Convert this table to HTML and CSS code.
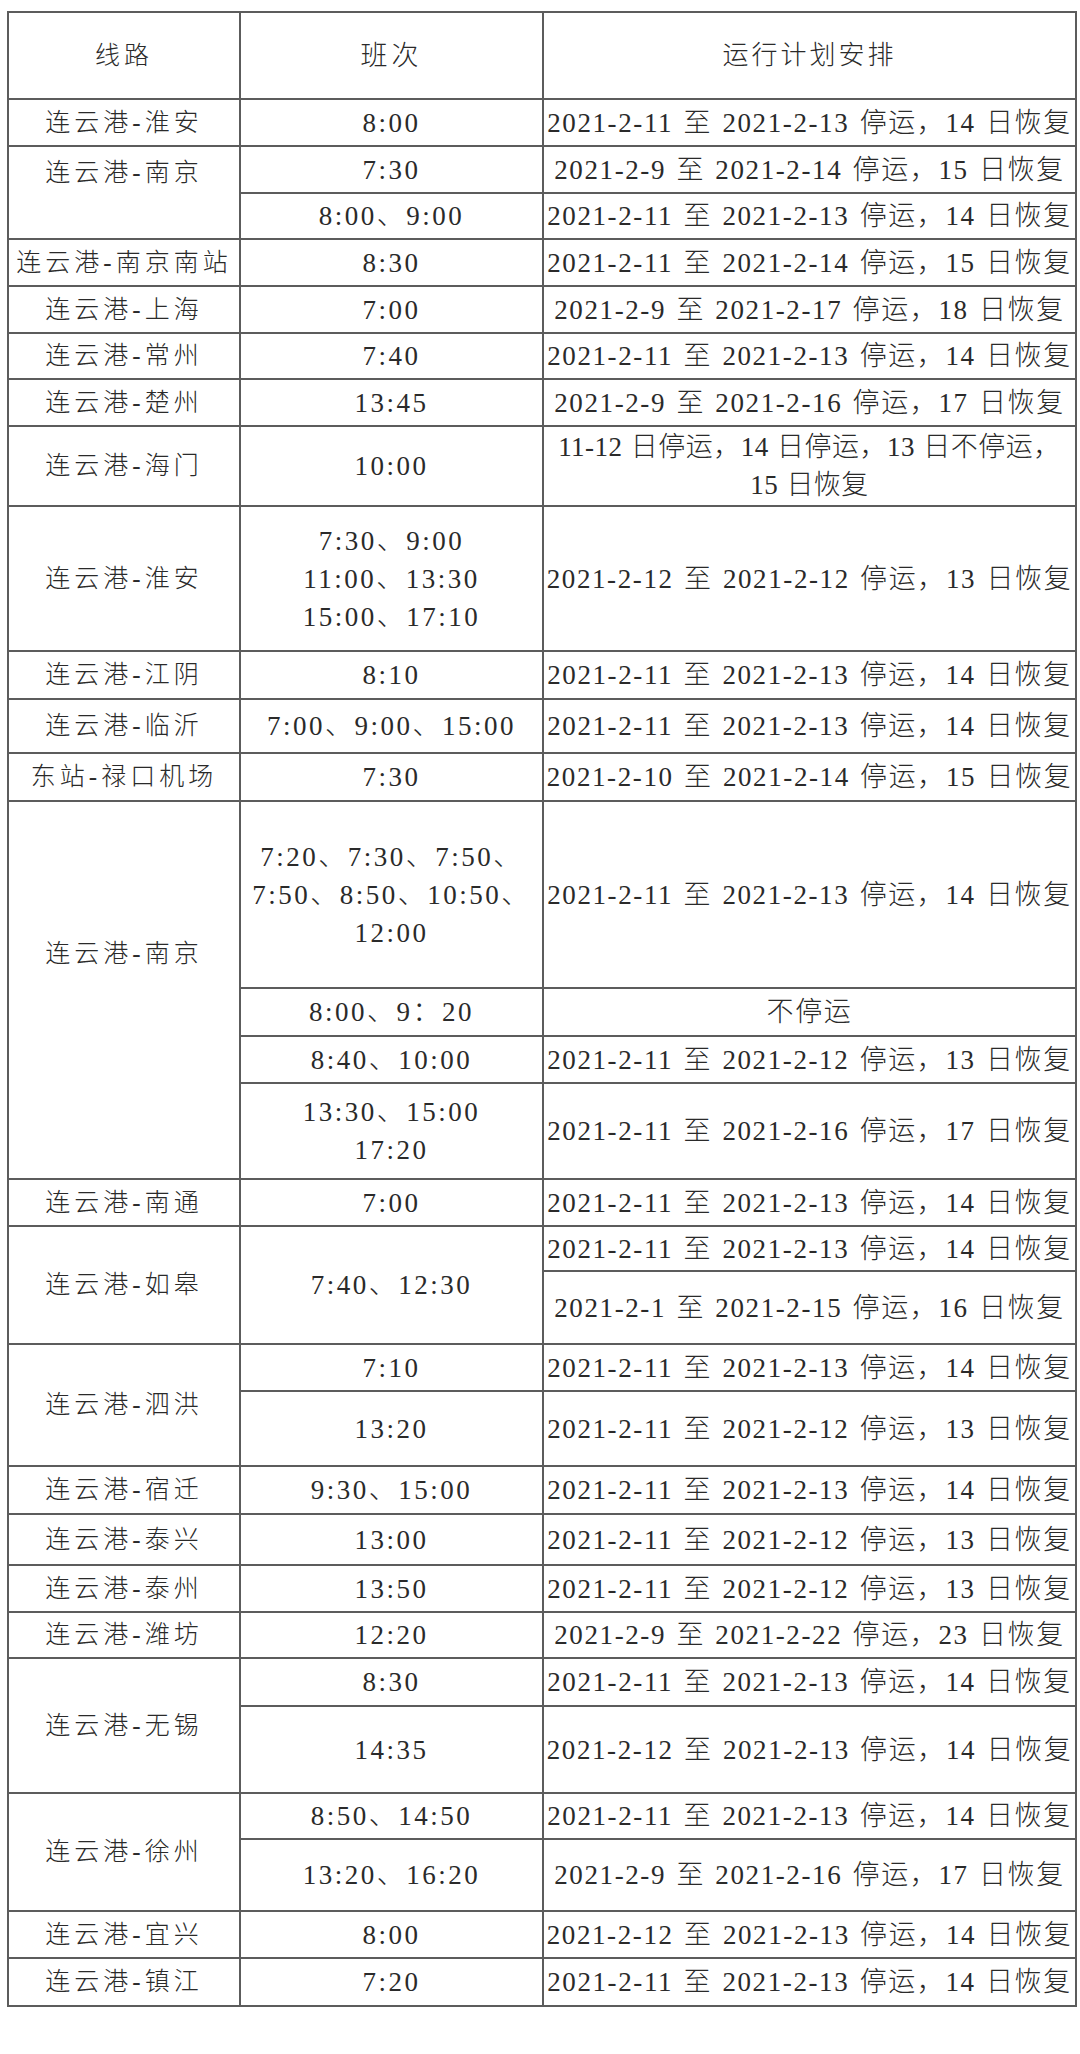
FILE: index.html
```html
<!DOCTYPE html>
<html lang="zh-CN">
<head>
<meta charset="utf-8">
<title>运行计划安排</title>
<link rel="stylesheet" href="styles.css">
</head>
<body>
<table class="sched">
  <colgroup>
    <col class="c-route">
    <col class="c-time">
    <col class="c-plan">
  </colgroup>
  <thead>
    <tr class="h87">
      <th class="route">线路</th>
      <th class="time">班次</th>
      <th class="plan">运行计划安排</th>
    </tr>
  </thead>
  <tbody>
    <tr class="h47"><td class="route">连云港-淮安</td><td class="time">8:00</td><td class="plan">2021-2-11 至 2021-2-13 停运，14 日恢复</td></tr>
    <tr class="h47"><td class="route top" rowspan="2">连云港-南京</td><td class="time">7:30</td><td class="plan">2021-2-9 至 2021-2-14 停运，15 日恢复</td></tr>
    <tr class="h46"><td class="time">8:00、9:00</td><td class="plan">2021-2-11 至 2021-2-13 停运，14 日恢复</td></tr>
    <tr class="h47"><td class="route">连云港-南京南站</td><td class="time">8:30</td><td class="plan">2021-2-11 至 2021-2-14 停运，15 日恢复</td></tr>
    <tr class="h47"><td class="route">连云港-上海</td><td class="time">7:00</td><td class="plan">2021-2-9 至 2021-2-17 停运，18 日恢复</td></tr>
    <tr class="h46"><td class="route">连云港-常州</td><td class="time">7:40</td><td class="plan">2021-2-11 至 2021-2-13 停运，14 日恢复</td></tr>
    <tr class="h47"><td class="route">连云港-楚州</td><td class="time">13:45</td><td class="plan">2021-2-9 至 2021-2-16 停运，17 日恢复</td></tr>
    <tr class="h80"><td class="route">连云港-海门</td><td class="time">10:00</td><td class="plan tight">11-12 日停运，14 日停运，13 日不停运，<br>15 日恢复</td></tr>
    <tr class="h145"><td class="route">连云港-淮安</td><td class="time">7:30、9:00<br>11:00、13:30<br>15:00、17:10</td><td class="plan">2021-2-12 至 2021-2-12 停运，13 日恢复</td></tr>
    <tr class="h48"><td class="route">连云港-江阴</td><td class="time">8:10</td><td class="plan">2021-2-11 至 2021-2-13 停运，14 日恢复</td></tr>
    <tr class="h54"><td class="route">连云港-临沂</td><td class="time">7:00、9:00、15:00</td><td class="plan">2021-2-11 至 2021-2-13 停运，14 日恢复</td></tr>
    <tr class="h48"><td class="route">东站-禄口机场</td><td class="time">7:30</td><td class="plan">2021-2-10 至 2021-2-14 停运，15 日恢复</td></tr>
    <tr class="h187"><td class="route raised" rowspan="4">连云港-南京</td><td class="time">7:20、7:30、7:50、<br>7:50、8:50、10:50、<br>12:00</td><td class="plan">2021-2-11 至 2021-2-13 停运，14 日恢复</td></tr>
    <tr class="h48"><td class="time">8:00、9：20</td><td class="plan">不停运</td></tr>
    <tr class="h47"><td class="time">8:40、10:00</td><td class="plan">2021-2-11 至 2021-2-12 停运，13 日恢复</td></tr>
    <tr class="h96"><td class="time">13:30、15:00<br>17:20</td><td class="plan">2021-2-11 至 2021-2-16 停运，17 日恢复</td></tr>
    <tr class="h47"><td class="route">连云港-南通</td><td class="time">7:00</td><td class="plan">2021-2-11 至 2021-2-13 停运，14 日恢复</td></tr>
    <tr class="h45"><td class="route" rowspan="2">连云港-如皋</td><td class="time" rowspan="2">7:40、12:30</td><td class="plan">2021-2-11 至 2021-2-13 停运，14 日恢复</td></tr>
    <tr class="h73"><td class="plan">2021-2-1 至 2021-2-15 停运，16 日恢复</td></tr>
    <tr class="h47"><td class="route" rowspan="2">连云港-泗洪</td><td class="time">7:10</td><td class="plan">2021-2-11 至 2021-2-13 停运，14 日恢复</td></tr>
    <tr class="h75"><td class="time">13:20</td><td class="plan">2021-2-11 至 2021-2-12 停运，13 日恢复</td></tr>
    <tr class="h48"><td class="route">连云港-宿迁</td><td class="time">9:30、15:00</td><td class="plan">2021-2-11 至 2021-2-13 停运，14 日恢复</td></tr>
    <tr class="h51"><td class="route">连云港-泰兴</td><td class="time">13:00</td><td class="plan">2021-2-11 至 2021-2-12 停运，13 日恢复</td></tr>
    <tr class="h47"><td class="route">连云港-泰州</td><td class="time">13:50</td><td class="plan">2021-2-11 至 2021-2-12 停运，13 日恢复</td></tr>
    <tr class="h46"><td class="route">连云港-潍坊</td><td class="time">12:20</td><td class="plan">2021-2-9 至 2021-2-22 停运，23 日恢复</td></tr>
    <tr class="h48"><td class="route" rowspan="2">连云港-无锡</td><td class="time">8:30</td><td class="plan">2021-2-11 至 2021-2-13 停运，14 日恢复</td></tr>
    <tr class="h87"><td class="time">14:35</td><td class="plan">2021-2-12 至 2021-2-13 停运，14 日恢复</td></tr>
    <tr class="h46"><td class="route" rowspan="2">连云港-徐州</td><td class="time">8:50、14:50</td><td class="plan">2021-2-11 至 2021-2-13 停运，14 日恢复</td></tr>
    <tr class="h72"><td class="time">13:20、16:20</td><td class="plan">2021-2-9 至 2021-2-16 停运，17 日恢复</td></tr>
    <tr class="h47"><td class="route">连云港-宜兴</td><td class="time">8:00</td><td class="plan">2021-2-12 至 2021-2-13 停运，14 日恢复</td></tr>
    <tr class="h48"><td class="route">连云港-镇江</td><td class="time">7:20</td><td class="plan">2021-2-11 至 2021-2-13 停运，14 日恢复</td></tr>
  </tbody>
</table>
</body>
</html>
```

FILE: styles.css
```css
html, body {
  background: #ffffff;
}

body {
  margin: 11px 0 0 7px;
  font-family: "Liberation Serif", "Noto Sans CJK SC", serif;
  color: #2a2a2a;
}

.sched {
  border-collapse: collapse;
  table-layout: fixed;
  width: 1068px;
}

.c-route { width: 232px; }
.c-time { width: 303px; }
.c-plan { width: 533px; }

.sched th,
.sched td {
  border: 2px solid #5c5c5c;
  padding: 0;
  text-align: center;
  vertical-align: middle;
  font-weight: 300;
  line-height: 38px;
  white-space: nowrap;
}

.sched .route {
  font-size: 25px;
  letter-spacing: 4px;
}

.sched .time {
  font-size: 27px;
  letter-spacing: 2.5px;
}

.sched .plan {
  font-size: 27px;
  letter-spacing: 1.6px;
  word-spacing: 2px;
}

.sched .plan.tight {
  letter-spacing: 0.5px;
  word-spacing: 1px;
}

.sched th.route,
.sched th.time {
  letter-spacing: 4px;
}

.sched th.plan {
  font-size: 26px;
  letter-spacing: 3px;
}

.sched td.top {
  vertical-align: top;
  padding-top: 7px;
}

.sched td.raised {
  padding-bottom: 72px;
}

.h45 { height: 45px; }
.h46 { height: 46px; }
.h47 { height: 47px; }
.h48 { height: 48px; }
.h51 { height: 51px; }
.h54 { height: 54px; }
.h72 { height: 72px; }
.h73 { height: 73px; }
.h75 { height: 75px; }
.h80 { height: 80px; }
.h87 { height: 87px; }
.h96 { height: 96px; }
.h145 { height: 145px; }
.h187 { height: 187px; }
```
